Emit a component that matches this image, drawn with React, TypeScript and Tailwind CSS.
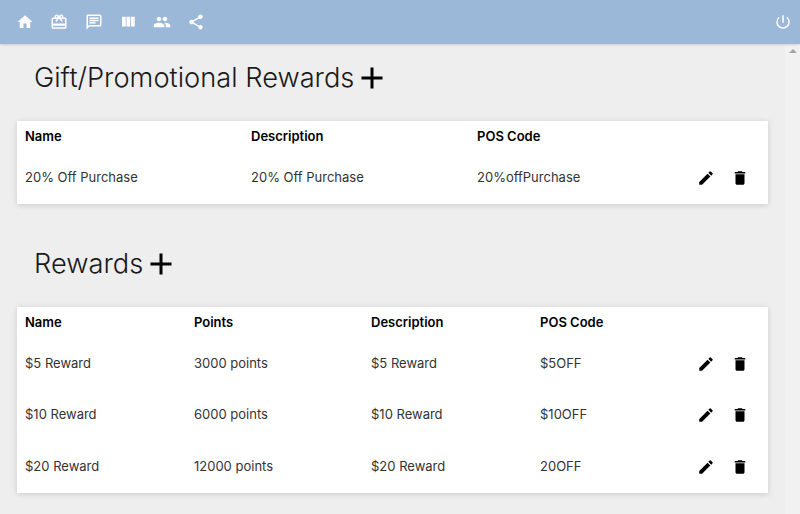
import { MdHome, MdOutlineRedeem, MdOutlineChat, MdPeople, MdShare, MdPowerSettingsNew, MdEdit, MdDelete, MdAdd } from "react-icons/md";

const giftRows = [["20% Off Purchase", "20% Off Purchase", "20%offPurchase"]];

const rewardRows = [
  ["$5 Reward", "3000 points", "$5 Reward", "$5OFF"],
  ["$10 Reward", "6000 points", "$10 Reward", "$10OFF"],
  ["$20 Reward", "12000 points", "$20 Reward", "20OFF"],
];

const WeekIcon = ({ className }: { className: string }) => (
  <svg viewBox="0 0 24 24" fill="currentColor" className={className}>
    <path d="M10 18h5V5h-5v13zm-6 0h5V5H4v13zM16 5v13h5V5h-5z" />
  </svg>
);

const Actions = () => (
  <div className="flex items-center justify-end gap-4 pr-[19px]">
    <MdEdit className="w-[18px] h-[18px] text-black" />
    <MdDelete className="w-[18px] h-[18px] text-black" />
  </div>
);

const Heading = ({ title }: { title: string }) => (
  <div className="flex items-center pl-[34px] h-[40px] text-[27.25px] text-[#1a1a1a] font-light">
    <span>{title}</span>
    <MdAdd className="w-9 h-9 text-black" />
  </div>
);

const Card = ({ columns, head, rows }: { columns: string; head: string[]; rows: string[][] }) => (
  <div className="ml-[17px] w-[751px] pb-[0.6px] bg-white shadow-[0_1px_6px_rgba(0,0,0,0.15)]">
    <div className={`grid ${columns} h-[30.9px] items-center pl-2 font-semibold text-[13px] text-black`}>
      {head.map((h, i) => (
        <span key={i}>{h}</span>
      ))}
    </div>
    {rows.map((row, i) => (
      <div key={i} className={`grid ${columns} h-[51.5px] items-center pl-2 text-[13px] text-[#333]`}>
        {row.map((c, j) => (
          <span key={j}>{c}</span>
        ))}
        <Actions />
      </div>
    ))}
  </div>
);

export default function App() {
  return (
    <div className="w-[800px] h-[514px] overflow-hidden flex flex-col bg-[#eeeeee] font-['Inter',sans-serif]">
      <header className="h-11 shrink-0 bg-[#9cb8d9] flex items-center justify-between pl-4 pr-2 text-white shadow-sm z-10">
        <div className="flex items-center gap-[16.25px]">
          <MdHome className="w-[18px] h-[18px]" />
          <MdOutlineRedeem className="w-[18px] h-[18px]" />
          <MdOutlineChat className="w-[18px] h-[18px]" />
          <WeekIcon className="w-[18px] h-[18px]" />
          <MdPeople className="w-[18px] h-[18px]" />
          <MdShare className="w-[18px] h-[18px]" />
        </div>
        <MdPowerSettingsNew className="w-[18px] h-[18px]" />
      </header>
      <div className="flex flex-1 min-h-0">
        <main className="flex-1 pt-[14px]">
          <Heading title="Gift/Promotional Rewards" />
          <div className="h-[23px]" />
          <Card
            columns="grid-cols-[226px_226px_210px_1fr]"
            head={["Name", "Description", "POS Code"]}
            rows={giftRows}
          />
          <div className="h-10" />
          <Heading title="Rewards" />
          <div className="h-[23px]" />
          <Card
            columns="grid-cols-[169px_177px_169px_150px_1fr]"
            head={["Name", "Points", "Description", "POS Code"]}
            rows={rewardRows}
          />
        </main>
        <div className="w-[15px] shrink-0 bg-[#f1f1f1] flex justify-center pt-[5px]">
          <div className="w-0 h-0 border-x-[4px] border-x-transparent border-b-[4px] border-b-[#a3a3a3]" />
        </div>
      </div>
    </div>
  );
}
